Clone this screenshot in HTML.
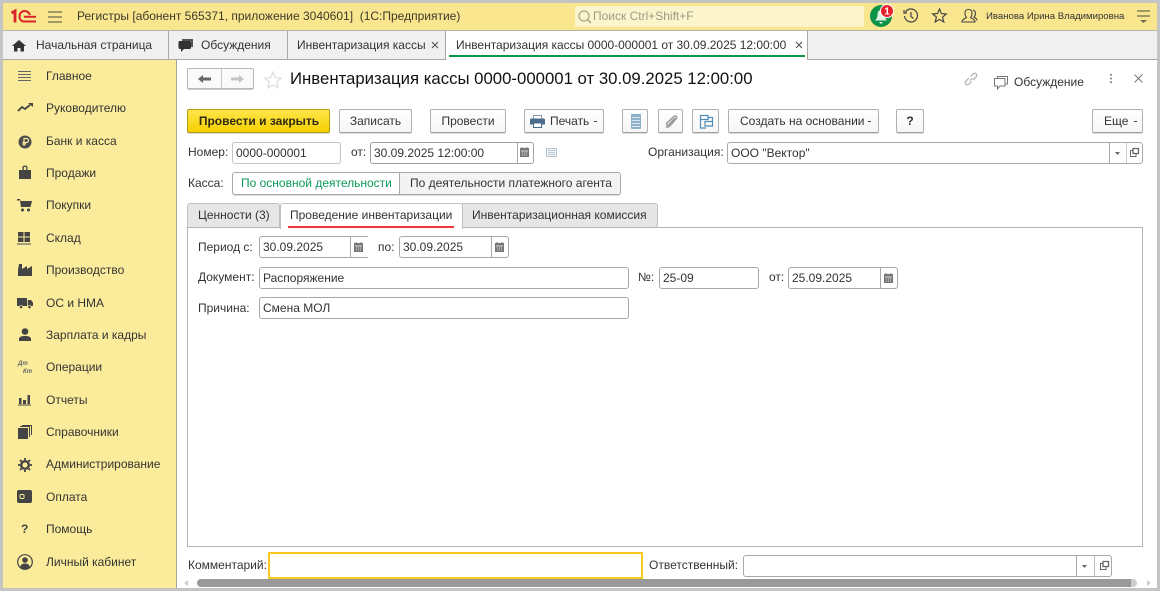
<!DOCTYPE html>
<html lang="ru"><head><meta charset="utf-8"><style>
*{box-sizing:border-box}
html,body{margin:0;padding:0;width:1160px;height:591px;overflow:hidden;background:#fff;font:12px "Liberation Sans",sans-serif;color:#333}
.a{position:absolute}
.t{position:absolute;white-space:nowrap;line-height:16px}
.b{position:absolute;height:24px;border:1px solid #b0b0b0;border-bottom-color:#a0a0a0;border-radius:2px;background:linear-gradient(#fff,#f6f6f6);text-align:center;line-height:22px;white-space:nowrap;color:#333;box-shadow:0 1px 0 #ddd}
.f{position:absolute;height:22px;border:1px solid #a8a8a8;border-radius:3px;background:#fff;line-height:20px;padding-left:3px;color:#333;white-space:nowrap}
.s{position:absolute;left:46px;line-height:16px;color:#333;white-space:nowrap}
.d{position:absolute;top:121px;width:3px;height:1px;background:#444}
svg{position:absolute;display:block;overflow:visible}
.sep{position:absolute;top:0;bottom:0;width:1px;background:#a8a8a8}
</style></head><body>
<div class="a" style="left:0;top:0;width:1160px;height:591px;background:#c4c4c4"></div>
<div class="a" style="left:3px;top:3px;width:1154px;height:585px;background:#fff"></div>

<!-- header -->
<div class="a" style="left:3px;top:3px;width:1154px;height:28px;background:#f9e68f;border-bottom:1px solid #b5b5a5"></div>
<svg style="left:11px;top:9px" width="26" height="14" viewBox="0 0 26 14"><g fill="none" stroke="#d8232a"><path d="M.5 4 4 2V13.500" stroke-width="2.800"/><path d="M19 6C18 3.500 16.500 2 13.500 2 10.500 2 8.500 4.500 8.500 7.500S10.500 12.500 13.500 12.500H25" stroke-width="2"/><path d="M13 7.800H25" stroke-width="2"/></g></svg>
<svg style="left:48px;top:11px" width="14" height="12"><path d="M0 1H14M0 6H14M0 11H14" stroke="#6d6a50" stroke-width="1.300"/></svg>
<div class="t" style="left:77px;top:8px;color:#3c3a28">Регистры [абонент 565371, приложение 3040601]&nbsp; (1С:Предприятие)</div>
<div class="a" style="left:575px;top:6px;width:289px;height:21px;background:#fcf5cb;border-radius:2px"></div>
<svg style="left:577px;top:9px" width="16" height="16"><circle cx="7" cy="7" r="5" fill="none" stroke="#a8a690" stroke-width="1.200"/><path d="M10.500 10.500 14 14" stroke="#a8a690" stroke-width="1.500"/></svg>
<div class="t" style="left:593px;top:8px;color:#9b9a86">Поиск Ctrl+Shift+F</div>
<svg style="left:868px;top:4px" width="26" height="24"><circle cx="13" cy="12" r="11" fill="#0d9348"/><path d="M13 6C10 6 9.500 9 9.500 11 9.500 14 8 15 7 16.500H19C18 15 16.500 14 16.500 11 16.500 9 16 6 13 6ZM11 18H15L13 20Z" fill="#dff0e2"/><circle cx="19" cy="7" r="6.500" fill="#e8202c" stroke="#fff" stroke-width="1"/><text x="19" y="10.500" font-family="Liberation Sans" font-size="10" font-weight="700" fill="#fff" text-anchor="middle">1</text></svg>
<svg style="left:903px;top:8px" width="16" height="16" fill="none" stroke="#444" stroke-width="1.200"><path d="M2.500 4A6.500 6.500 0 1 1 1.500 8"/><path d="M1 2V5H4M8 4V8.500L10.500 10.500"/></svg>
<svg style="left:932px;top:8px" width="15" height="15"><path d="M7.500 1 9.400 5.600 14.300 6 10.600 9.100 11.800 14 7.500 11.400 3.200 14 4.400 9.100 .7 6 5.600 5.600Z" fill="none" stroke="#444" stroke-width="1.200"/></svg>
<svg style="left:961px;top:8px" width="17" height="16" fill="none" stroke="#444" stroke-width="1.100"><path d="M1 14C1 11 4 11 5.500 9.500 4 8 4 6.500 4 5 4 2.500 5.500 1.500 7.500 1.500S11 2.500 11 5C11 6.500 11 8 9.500 9.500 11 11 14 11 14 14Z"/><path d="M12 2C14 2.500 14.500 4 14.500 5.500S14 8 13 9C14.500 10 16 10.500 16 12.500"/></svg>
<div class="t" style="left:986px;top:9px;font-size:9.600px;color:#333">Иванова Ирина Владимировна</div>
<svg style="left:1136px;top:10px" width="15" height="14"><path d="M1 1H14M1 6H14" stroke="#6d6a50" stroke-width="1.300"/><path d="M4 10H11L7.500 13Z" fill="#6d6a50"/></svg>

<!-- tabs -->
<div class="a" style="left:3px;top:31px;width:1154px;height:29px;background:#f0f0f0;border-bottom:1px solid #a8a8a8"></div>
<svg style="left:12px;top:40px" width="14" height="12"><path d="M7 0 0 6H2V11.500H5.500V8H8.500V11.500H12V6H14Z" fill="#333"/></svg>
<div class="t" style="left:36px;top:37px">Начальная страница</div>
<div class="a" style="left:168px;top:31px;width:1px;height:28px;background:#a8a8a8"></div>
<svg style="left:178px;top:39px" width="15" height="13"><path d="M4 0H15V8H13V2H4Z" fill="#555"/><path d="M2 2H11.500Q13 2 13 3.500V8.500Q13 10 11.500 10H6L3 13V10H2Q.5 10 .5 8.500V3.500Q.5 2 2 2Z" fill="#333"/></svg>
<div class="t" style="left:201px;top:37px">Обсуждения</div>
<div class="a" style="left:287px;top:31px;width:1px;height:28px;background:#a8a8a8"></div>
<div class="t" style="left:297px;top:37px">Инвентаризация кассы</div>
<svg style="left:431px;top:41px" width="8" height="8"><path d="M1 1 7 7M7 1 1 7" stroke="#555" stroke-width="1.100"/></svg>
<div class="a" style="left:445px;top:31px;width:1px;height:28px;background:#a8a8a8"></div>
<div class="a" style="left:446px;top:31px;width:362px;height:29px;background:#fff;border-right:1px solid #a8a8a8"></div>
<div class="t" style="left:456px;top:37px;letter-spacing:-.02px">Инвентаризация кассы 0000-000001 от 30.09.2025 12:00:00</div>
<svg style="left:795px;top:41px" width="8" height="8"><path d="M1 1 7 7M7 1 1 7" stroke="#555" stroke-width="1.100"/></svg>
<div class="a" style="left:449px;top:55px;width:356px;height:2px;background:#0c9647"></div>

<!-- sidebar -->
<div class="a" style="left:3px;top:60px;width:174px;height:528px;background:#fbec9b;border-right:1px solid #a9a68f"></div>
<div class="s" style="top:68px">Главное</div>
<div class="s" style="top:100px">Руководителю</div>
<div class="s" style="top:133px">Банк и касса</div>
<div class="s" style="top:165px">Продажи</div>
<div class="s" style="top:197px">Покупки</div>
<div class="s" style="top:230px">Склад</div>
<div class="s" style="top:262px">Производство</div>
<div class="s" style="top:295px">ОС и НМА</div>
<div class="s" style="top:327px">Зарплата и кадры</div>
<div class="s" style="top:359px">Операции</div>
<div class="s" style="top:392px">Отчеты</div>
<div class="s" style="top:424px">Справочники</div>
<div class="s" style="top:456px">Администрирование</div>
<div class="s" style="top:489px">Оплата</div>
<div class="s" style="top:521px">Помощь</div>
<div class="s" style="top:554px">Личный кабинет</div>

<svg style="left:18px;top:71px" width="13" height="12"><path d="M0 .5H13M0 3.500H13M0 6.500H13M0 9.500H13" stroke="#666" stroke-width="1"/></svg>
<svg style="left:17px;top:103px" width="16" height="9"><path d="M1 8 5 4 8 6 13 2" fill="none" stroke="#444" stroke-width="1.800"/><path d="M11 0H16V4Z" fill="#444"/></svg>
<svg style="left:18px;top:135px" width="14" height="14"><circle cx="7" cy="7" r="6.500" fill="#4d4d4d"/><path d="M6 11V3.500H8.500A1.800 1.800 0 0 1 8.500 7.500H4.500M4.500 9H8" fill="none" stroke="#fbec9b" stroke-width="1.200"/></svg>
<svg style="left:19px;top:165px" width="12" height="14"><path d="M0 5H3.500V2.500Q3.500 .5 6 .5T8.500 2.500V5H12V14H0ZM4.800 5H7.200V2.500Q7.200 1.700 6 1.700T4.800 2.500Z" fill="#444"/></svg>
<svg style="left:17px;top:199px" width="15" height="14"><path d="M0 0H3L3.500 2H15L13.500 8H4L3 1.500H0Z" fill="#444"/><circle cx="5.500" cy="11" r="1.500" fill="#444"/><circle cx="11.500" cy="11" r="1.500" fill="#444"/></svg>
<svg style="left:17px;top:232px" width="14" height="13"><path d="M1 0H6.500V4.500H1ZM7.500 0H13V4.500H7.500ZM1 5.500H6.500V10H1ZM7.500 5.500H13V10H7.500ZM0 11.500H14V12.500H0Z" fill="#444"/></svg>
<svg style="left:18px;top:263px" width="14" height="13"><path d="M0 13V7L1 1H4V6L9 3V6L14 3V13Z" fill="#444"/></svg>
<svg style="left:17px;top:298px" width="16" height="11"><path d="M0 0H10V8H0ZM10.800 2H14L16 4.500V8H10.800Z" fill="#444"/><circle cx="4" cy="9" r="1.600" fill="#444" stroke="#fbec9b" stroke-width=".6"/><circle cx="12.500" cy="9" r="1.600" fill="#444" stroke="#fbec9b" stroke-width=".6"/></svg>
<svg style="left:18px;top:328px" width="14" height="13"><circle cx="7" cy="3.500" r="3.300" fill="#444"/><path d="M1 13V11C1 8.500 4 8 7 8S13 8.500 13 11V13Z" fill="#444"/></svg>
<div class="t" style="left:18px;top:360px;font-size:6px;font-style:italic;font-weight:700;line-height:8px;color:#666">Дт</div>
<div class="t" style="left:23px;top:368px;font-size:6px;font-style:italic;font-weight:700;line-height:8px;color:#666">Кт</div>
<svg style="left:18px;top:394px" width="13" height="12"><path d="M1 4H3.500V10H1ZM5 6H8V10H5ZM9.500 1H12V10H9.500ZM0 10.500H13V11.500H0Z" fill="#444"/></svg>
<svg style="left:18px;top:425px" width="14" height="14"><path d="M0 3H10V14H0Z" fill="#444"/><path d="M2 1.500H11.500V12M4 .5H13.500V10" fill="none" stroke="#444"/></svg>
<svg style="left:18px;top:458px" width="14" height="14"><circle cx="7" cy="7" r="3.800" fill="none" stroke="#444" stroke-width="2.400"/><path d="M7 0V14M0 7H14M2 2 12 12M12 2 2 12" stroke="#444" stroke-width="1.800" stroke-dasharray="2.200 9.800 2.200 0"/></svg>
<svg style="left:17px;top:490px" width="15" height="13"><rect width="15" height="13" rx="2" fill="#444"/><rect x="3" y="4.500" width="4" height="4" rx="1" fill="none" stroke="#fbec9b"/></svg>
<div class="t" style="left:21px;top:521px;font-weight:700;color:#444">?</div>
<svg style="left:17px;top:554px" width="16" height="16"><circle cx="8" cy="8" r="7.300" fill="none" stroke="#444" stroke-width="1.200"/><circle cx="8" cy="6" r="2.800" fill="#444"/><path d="M3.300 12.500C4 10 6 9.500 8 9.500S12 10 12.700 12.500 10 15 8 15 4 14 3.300 12.500Z" fill="#444"/></svg>

<!-- title row -->
<div class="a" style="left:187px;top:68px;width:67px;height:21px;border:1px solid #b8b8b8;border-radius:2px;background:#fafafa;box-shadow:0 1px 0 #ccc"></div>
<div class="a" style="left:221px;top:69px;width:1px;height:19px;background:#c8c8c8"></div>
<svg style="left:198px;top:75px" width="13" height="8"><path d="M0 4 5 0V2.500H13V5.500H5V8Z" fill="#666"/></svg>
<svg style="left:231px;top:75px" width="13" height="8"><path d="M13 4 8 0V2.500H0V5.500H8V8Z" fill="#c4c4c4"/></svg>
<svg style="left:264px;top:71px" width="18" height="18"><path d="M9 1 11.300 6.700 17.300 7.200 12.700 11 14.100 17 9 13.800 3.900 17 5.300 11 .7 7.200 6.700 6.700Z" fill="none" stroke="#dcdcdc" stroke-width="1.100"/></svg>
<div class="t" style="left:290px;top:69px;font-size:16.760px;line-height:20px;color:#111">Инвентаризация кассы 0000-000001 от 30.09.2025 12:00:00</div>
<svg style="left:964px;top:72px" width="14" height="14" fill="none" stroke="#a8a8a8" stroke-width="1.100"><path d="M6 8.500 8.500 6M5 6 2 9Q.5 11 2 12.300 3.500 13.500 5 12L7.500 9.500M9 8 12 5Q13.500 3 12 1.700 10.500 .5 9 2L6.500 4.500"/></svg>
<svg style="left:994px;top:76px" width="14" height="14" fill="none" stroke="#777"><path d="M3.500 2.500V.5H13.500V8H11"/><path d="M.5 2.500H11V10H6L3.500 13V10H.5Z"/></svg>
<div class="t" style="left:1014px;top:74px">Обсуждение</div>
<svg style="left:1109px;top:74px" width="4" height="9"><path d="M2 0V1.500M2 3.750V5.250M2 7.500V9" stroke="#666" stroke-width="1.700"/></svg>
<svg style="left:1134px;top:74px" width="9" height="9"><path d="M.5 .5 8.500 8.500M8.500 .5 .5 8.500" stroke="#777" stroke-width="1"/></svg>

<!-- command bar -->
<div class="b" style="left:187px;top:109px;width:143px;background:linear-gradient(#ffe64a,#f5d000);border-color:#b39a13;font-weight:700;color:#2f2a10;padding-left:1px">Провести и закрыть</div>
<div class="b" style="left:339px;top:109px;width:73px">Записать</div>
<div class="b" style="left:430px;top:109px;width:76px">Провести</div>
<div class="b" style="left:524px;top:109px;width:80px;text-align:left;padding-left:25px">Печать</div>
<div class="d" style="left:594px"></div>
<svg style="left:530px;top:115px" width="15" height="13"><path d="M3.500 .5H11.500V4H3.500Z" fill="#fff" stroke="#8a9aa8"/><path d="M1.500 3.500H13.500Q15 3.500 15 5V9.500H12V7.500H3V9.500H0V5Q0 3.500 1.500 3.500Z" fill="#4c6c8c"/><path d="M3.500 8H11.500V12.500H3.500Z" fill="#fff" stroke="#4c6c8c"/></svg>
<div class="b" style="left:622px;top:109px;width:26px"></div>
<svg style="left:631px;top:114px" width="10" height="15"><rect width="10" height="15" rx="1" fill="#8db0cb"/><path d="M1 3.500H9M1 6.500H9M1 9.500H9M1 12.500H9" stroke="#dbe6ee"/></svg>
<div class="b" style="left:658px;top:109px;width:25px"></div>
<svg style="left:665px;top:115px" width="12" height="13" fill="none" stroke="#999" stroke-width="1.500"><path d="M10 3 4 9.500Q2.500 11 1.800 9.800 1 8.700 2.500 7.500L8.500 1.800Q10.500 .3 11.500 1.500 12.300 3 10.500 4.500L5 10.800Q2.500 13 1 11.500"/></svg>
<div class="b" style="left:692px;top:109px;width:27px"></div>
<svg style="left:700px;top:115px" width="13" height="14" fill="none" stroke="#4f8cb8" stroke-width="1.200"><path d="M.5 .5H8V4.500H.5ZM5 6.500H12.500V11H5ZM.5 4.500V13H6M8 2.500H12.500V6.500"/></svg>
<div class="b" style="left:728px;top:109px;width:151px;text-align:left;padding-left:11px">Создать на основании</div>
<div class="d" style="left:868px"></div>
<div class="b" style="left:896px;top:109px;width:28px;font-weight:700">?</div>
<div class="b" style="left:1092px;top:109px;width:51px;text-align:left;padding-left:11px">Еще</div>
<div class="d" style="left:1134px"></div>

<!-- row Номер -->
<div class="t" style="left:188px;top:144px">Номер:</div>
<div class="f" style="left:232px;top:142px;width:109px;border-color:#c4c4c4">0000-000001</div>
<div class="t" style="left:351px;top:144px">от:</div>
<div class="f" style="left:370px;top:142px;width:164px;border-color:#a0a0a0;font-size:12px">30.09.2025 12:00:00<div class="sep" style="left:146px"></div></div>
<svg style="left:520px;top:147px" width="9" height="11"><path d="M0 1H9V10H0Z" fill="#777"/><path d="M2 0V2M7 0V2" stroke="#777"/><path d="M1 4H8M2 6H3M4 6H5M6 6H7M2 8H3M4 8H5M6 8H7" stroke="#ddd"/></svg>
<svg style="left:546px;top:148px" width="11" height="9"><rect x=".5" y=".5" width="10" height="8" fill="#eef3f6" stroke="#b7c6d2"/><path d="M2 2.500H9M2 4.500H9M2 6.500H9" stroke="#aebdca" stroke-width=".8"/></svg>
<div class="t" style="left:648px;top:144px">Организация:</div>
<div class="f" style="left:727px;top:142px;width:416px">ООО "Вектор"<div class="sep" style="left:381px"></div><div class="sep" style="left:398px;background:#ccc"></div></div>
<svg style="left:1115px;top:152px" width="5" height="3"><path d="M0 0H5L2.500 3Z" fill="#666"/></svg>
<svg style="left:1130px;top:148px" width="9" height="9" fill="none" stroke="#666"><path d="M3 .5H8.500V5.500H3Z" stroke-width="1.300"/><path d="M3 2.500H.5V8.500H6V5.500"/></svg>

<!-- row Касса -->
<div class="t" style="left:188px;top:175px">Касса:</div>
<div class="a" style="left:232px;top:172px;width:389px;height:23px;border:1px solid #a8a8a8;border-radius:3px;background:#fff;box-shadow:0 1px 0 #ddd"></div>
<div class="a" style="left:399px;top:173px;width:221px;height:21px;background:#f3f3f3;border-left:1px solid #a8a8a8;border-radius:0 3px 3px 0"></div>
<div class="t" style="left:241px;top:175px;color:#0b9a5c">По основной деятельности</div>
<div class="t" style="left:410px;top:175px">По деятельности платежного агента</div>

<!-- tabs inner -->
<div class="a" style="left:187px;top:203px;width:93px;height:25px;background:#e6e6e6;border:1px solid #c0c0c0;border-radius:3px 3px 0 0"></div>
<div class="a" style="left:462px;top:203px;width:196px;height:25px;background:#e6e6e6;border:1px solid #c0c0c0;border-radius:0 3px 3px 0"></div>
<div class="a" style="left:187px;top:227px;width:956px;height:320px;border:1px solid #b4b4b4;background:#fff"></div>
<div class="a" style="left:280px;top:203px;width:183px;height:26px;background:#fff;border:1px solid #c0c0c0;border-bottom:0;border-radius:3px 3px 0 0"></div>
<div class="t" style="left:198px;top:207px">Ценности (3)</div>
<div class="t" style="left:290px;top:207px">Проведение инвентаризации</div>
<div class="a" style="left:288px;top:226px;width:166px;height:2px;background:#f0363c"></div>
<div class="t" style="left:472px;top:207px">Инвентаризационная комиссия</div>

<!-- page fields -->
<div class="t" style="left:198px;top:239px">Период с:</div>
<div class="f" style="left:259px;top:236px;width:109px;border-right:0;border-radius:3px 0 0 3px">30.09.2025<div class="sep" style="left:90px"></div></div>
<svg style="left:354px;top:242px" width="9" height="10"><path d="M0 1H9V10H0Z" fill="#777"/><path d="M2 0V2M7 0V2" stroke="#777"/><path d="M1 4H8M2 6H3M4 6H5M6 6H7M2 8H3M4 8H5M6 8H7" stroke="#ddd"/></svg>
<div class="t" style="left:378px;top:239px">по:</div>
<div class="f" style="left:399px;top:236px;width:110px">30.09.2025<div class="sep" style="left:91px"></div></div>
<svg style="left:495px;top:242px" width="9" height="10"><path d="M0 1H9V10H0Z" fill="#777"/><path d="M2 0V2M7 0V2" stroke="#777"/><path d="M1 4H8M2 6H3M4 6H5M6 6H7M2 8H3M4 8H5M6 8H7" stroke="#ddd"/></svg>
<div class="t" style="left:198px;top:269px">Документ:</div>
<div class="f" style="left:259px;top:267px;width:370px">Распоряжение</div>
<div class="t" style="left:638px;top:269px">№:</div>
<div class="f" style="left:659px;top:267px;width:100px">25-09</div>
<div class="t" style="left:769px;top:269px">от:</div>
<div class="f" style="left:788px;top:267px;width:110px">25.09.2025<div class="sep" style="left:91px"></div></div>
<svg style="left:884px;top:273px" width="9" height="10"><path d="M0 1H9V10H0Z" fill="#777"/><path d="M2 0V2M7 0V2" stroke="#777"/><path d="M1 4H8M2 6H3M4 6H5M6 6H7M2 8H3M4 8H5M6 8H7" stroke="#ddd"/></svg>
<div class="t" style="left:198px;top:300px">Причина:</div>
<div class="f" style="left:259px;top:297px;width:370px">Смена МОЛ</div>

<!-- footer -->
<div class="t" style="left:188px;top:557px">Комментарий:</div>
<div class="a" style="left:268px;top:552px;width:375px;height:27px;border:2px solid #f7c81e;background:#fff"></div>
<div class="t" style="left:649px;top:557px">Ответственный:</div>
<div class="f" style="left:743px;top:555px;width:369px">&nbsp;<div class="sep" style="left:332px"></div><div class="sep" style="left:350px;background:#bbb"></div></div>
<svg style="left:1082px;top:565px" width="5" height="3"><path d="M0 0H5L2.500 3Z" fill="#666"/></svg>
<svg style="left:1100px;top:561px" width="9" height="9" fill="none" stroke="#666"><path d="M3 .5H8.500V5.500H3Z" stroke-width="1.300"/><path d="M3 2.500H.5V8.500H6V5.500"/></svg>

<!-- scrollbar -->
<svg style="left:184px;top:580px" width="5" height="6"><path d="M4 0V6L0 3Z" fill="#ccc"/></svg>
<div class="a" style="left:197px;top:579px;width:934px;height:8px;background:#999;border-radius:4px 0 0 4px"></div>
<div class="a" style="left:1131px;top:579px;width:6px;height:8px;background:#ccc;border-radius:0 4px 4px 0"></div>
<svg style="left:1146px;top:580px" width="5" height="6"><path d="M1 0V6L5 3Z" fill="#ccc"/></svg>
</body></html>
